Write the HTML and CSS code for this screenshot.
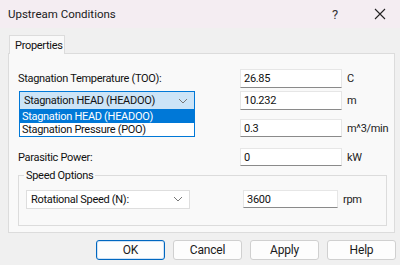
FILE: index.html
```html
<!DOCTYPE html>
<html lang="en">
<head>
    <meta charset="UTF-8">
    <title>Upstream Conditions</title>
    <link rel="stylesheet" href="styles.css">
</head>
<body>
    <div class="titlebar">
        <span class="title">Upstream Conditions</span>
        <span class="help-btn">?</span>
        <span class="close-btn">
            <svg width="12" height="12" viewBox="0 0 12 12"><path d="M1 1L11 11M11 1L1 11" stroke="#222" stroke-width="1.1" fill="none"/></svg>
        </span>
    </div>

    <div class="tabs">
        <div class="tab">Properties</div>
    </div>

    <div class="panel">
        <div class="row row-1">
            <div class="label">Stagnation Temperature (TOO):</div>
            <div class="input">26.85</div>
            <div class="unit">C</div>
        </div>
        <div class="row row-2">
            <div class="label">
                <div class="combo combo-open">
                    <span>Stagnation HEAD (HEADOO)</span>
                    <svg class="chevron" width="10" height="6" viewBox="0 0 10 6"><path d="M1 1L5 5L9 1" stroke="#777" stroke-width="1" fill="none"/></svg>
                    <!-- open dropdown list -->
                    <div class="combo-list">
                        <div class="combo-item selected">Stagnation HEAD (HEADOO)</div>
                        <div class="combo-item">Stagnation Pressure (POO)</div>
                    </div>
                </div>
            </div>
            <div class="input">10.232</div>
            <div class="unit">m</div>
        </div>
        <div class="row row-3">
            <div class="label"></div>
            <div class="input">0.3</div>
            <div class="unit">m^3/min</div>
        </div>
        <div class="row row-4">
            <div class="label">Parasitic Power:</div>
            <div class="input">0</div>
            <div class="unit">kW</div>
        </div>

        <fieldset class="group">
            <legend>Speed Options</legend>
            <div class="group-row">
                <div class="combo combo-speed">
                    <span>Rotational Speed (N):</span>
                    <svg class="chevron" width="10" height="6" viewBox="0 0 10 6"><path d="M1 1L5 5L9 1" stroke="#777" stroke-width="1" fill="none"/></svg>
                </div>
                <div class="input input-speed">3600</div>
                <div class="unit">rpm</div>
            </div>
        </fieldset>
    </div>

    <div class="buttons">
        <button class="btn btn-default">OK</button>
        <button class="btn">Cancel</button>
        <button class="btn">Apply</button>
        <button class="btn">Help</button>
    </div>
</body>
</html>
```

FILE: styles.css
```css
body {
    margin: 0;
    width: 400px;
    height: 265px;
    overflow: hidden;
    background-color: #f0f0f0;
    font-family: Roboto, "Liberation Sans", Arial, sans-serif;
    font-size: 11px;
    letter-spacing: -0.3px;
    color: #111;
    white-space: nowrap;
}
.titlebar {
    height: 28px;
    background-color: #f4edf2;
    display: flex;
    align-items: center;
    padding-left: 8px;
    letter-spacing: 0;
}
.title {
    font-size: 11.5px;
    color: #1a1a1a;
    flex: 1;
}
.help-btn {
    width: 14px;
    margin-right: 28px;
    font-size: 13px;
    color: #333;
}
.close-btn {
    width: 12px;
    height: 12px;
    margin-right: 14px;
    display: flex;
}
.tabs {
    padding: 7px 0 0 9px;
    height: 19px;
    position: relative;
    z-index: 1;
}
.tab {
    width: 56px;
    height: 19px;
    box-sizing: border-box;
    background-color: #f9f9f9;
    border: 1px solid #dcdcdc;
    border-bottom: none;
    padding: 3px 0 0 5px;
}
.panel {
    margin-left: 8px;
    width: 387px;
    height: 180px;
    box-sizing: border-box;
    background-color: #f9f9f9;
    border: 1px solid #dcdcdc;
    margin-top: -1px;
    padding: 15px 0 0 9px;
}
.row {
    display: flex;
    align-items: center;
    height: 19px;
}
.row-2 { margin-top: 3px; }
.row-3 { margin-top: 9px; height: 18px; }
.row-4 { margin-top: 11px; height: 18px; }
.label {
    width: 222px;
    height: 100%;
    display: flex;
    align-items: center;
}
.input {
    width: 102px;
    height: 100%;
    box-sizing: border-box;
    background-color: #fff;
    border: 1px solid #e6e6e6;
    border-bottom: 1px solid #8a8a8a;
    padding: 0 0 0 3px;
    display: flex;
    align-items: center;
}
.unit {
    margin-left: 5px;
    color: #222;
}
.combo {
    position: relative;
    height: 19px;
    box-sizing: border-box;
    display: flex;
    align-items: center;
    justify-content: space-between;
    padding: 0 6px 0 4px;
}
.combo-open {
    width: 176px;
    margin-left: 1px;
    background-color: #cce4f7;
    border: 1px solid #0078d7;
}
.combo-list {
    position: absolute;
    left: -1px;
    top: 17px;
    width: 176px;
    box-sizing: border-box;
    background-color: #fff;
    border: 1px solid #0078d7;
    z-index: 2;
}
.combo-item {
    height: 13px;
    line-height: 13px;
    padding-left: 2px;
}
.combo-item.selected {
    background-color: #0078d7;
    color: #fff;
}
.group {
    margin: 3px 0 0 0;
    width: 369px;
    box-sizing: border-box;
    border: 1px solid #dcdcdc;
    padding: 8px 0 13px 7px;
    height: 57px;
}
.group legend {
    padding: 0 2px;
    margin-left: -2px;
}
.group-row {
    display: flex;
    align-items: center;
    height: 18px;
}
.combo-speed {
    width: 164px;
    background-color: #fff;
    border: 1px solid #dedede;
    margin-right: 53px;
}
.input-speed {
    width: 95px;
}
.buttons {
    display: flex;
    justify-content: flex-end;
    gap: 8px;
    padding: 7px 4px 0 0;
}
.btn {
    width: 69px;
    height: 20px;
    background-color: #fdfdfd;
    border: 1px solid #d0d0d0;
    border-radius: 3px;
    font-family: Roboto, "Liberation Sans", Arial, sans-serif;
    font-size: 12px;
    letter-spacing: -0.2px;
    color: #1a1a1a;
    padding: 0;
}
.btn-default {
    border: 1px solid #0067c0;
    box-shadow: inset 0 0 0 1px #cfe2f5;
}
```
